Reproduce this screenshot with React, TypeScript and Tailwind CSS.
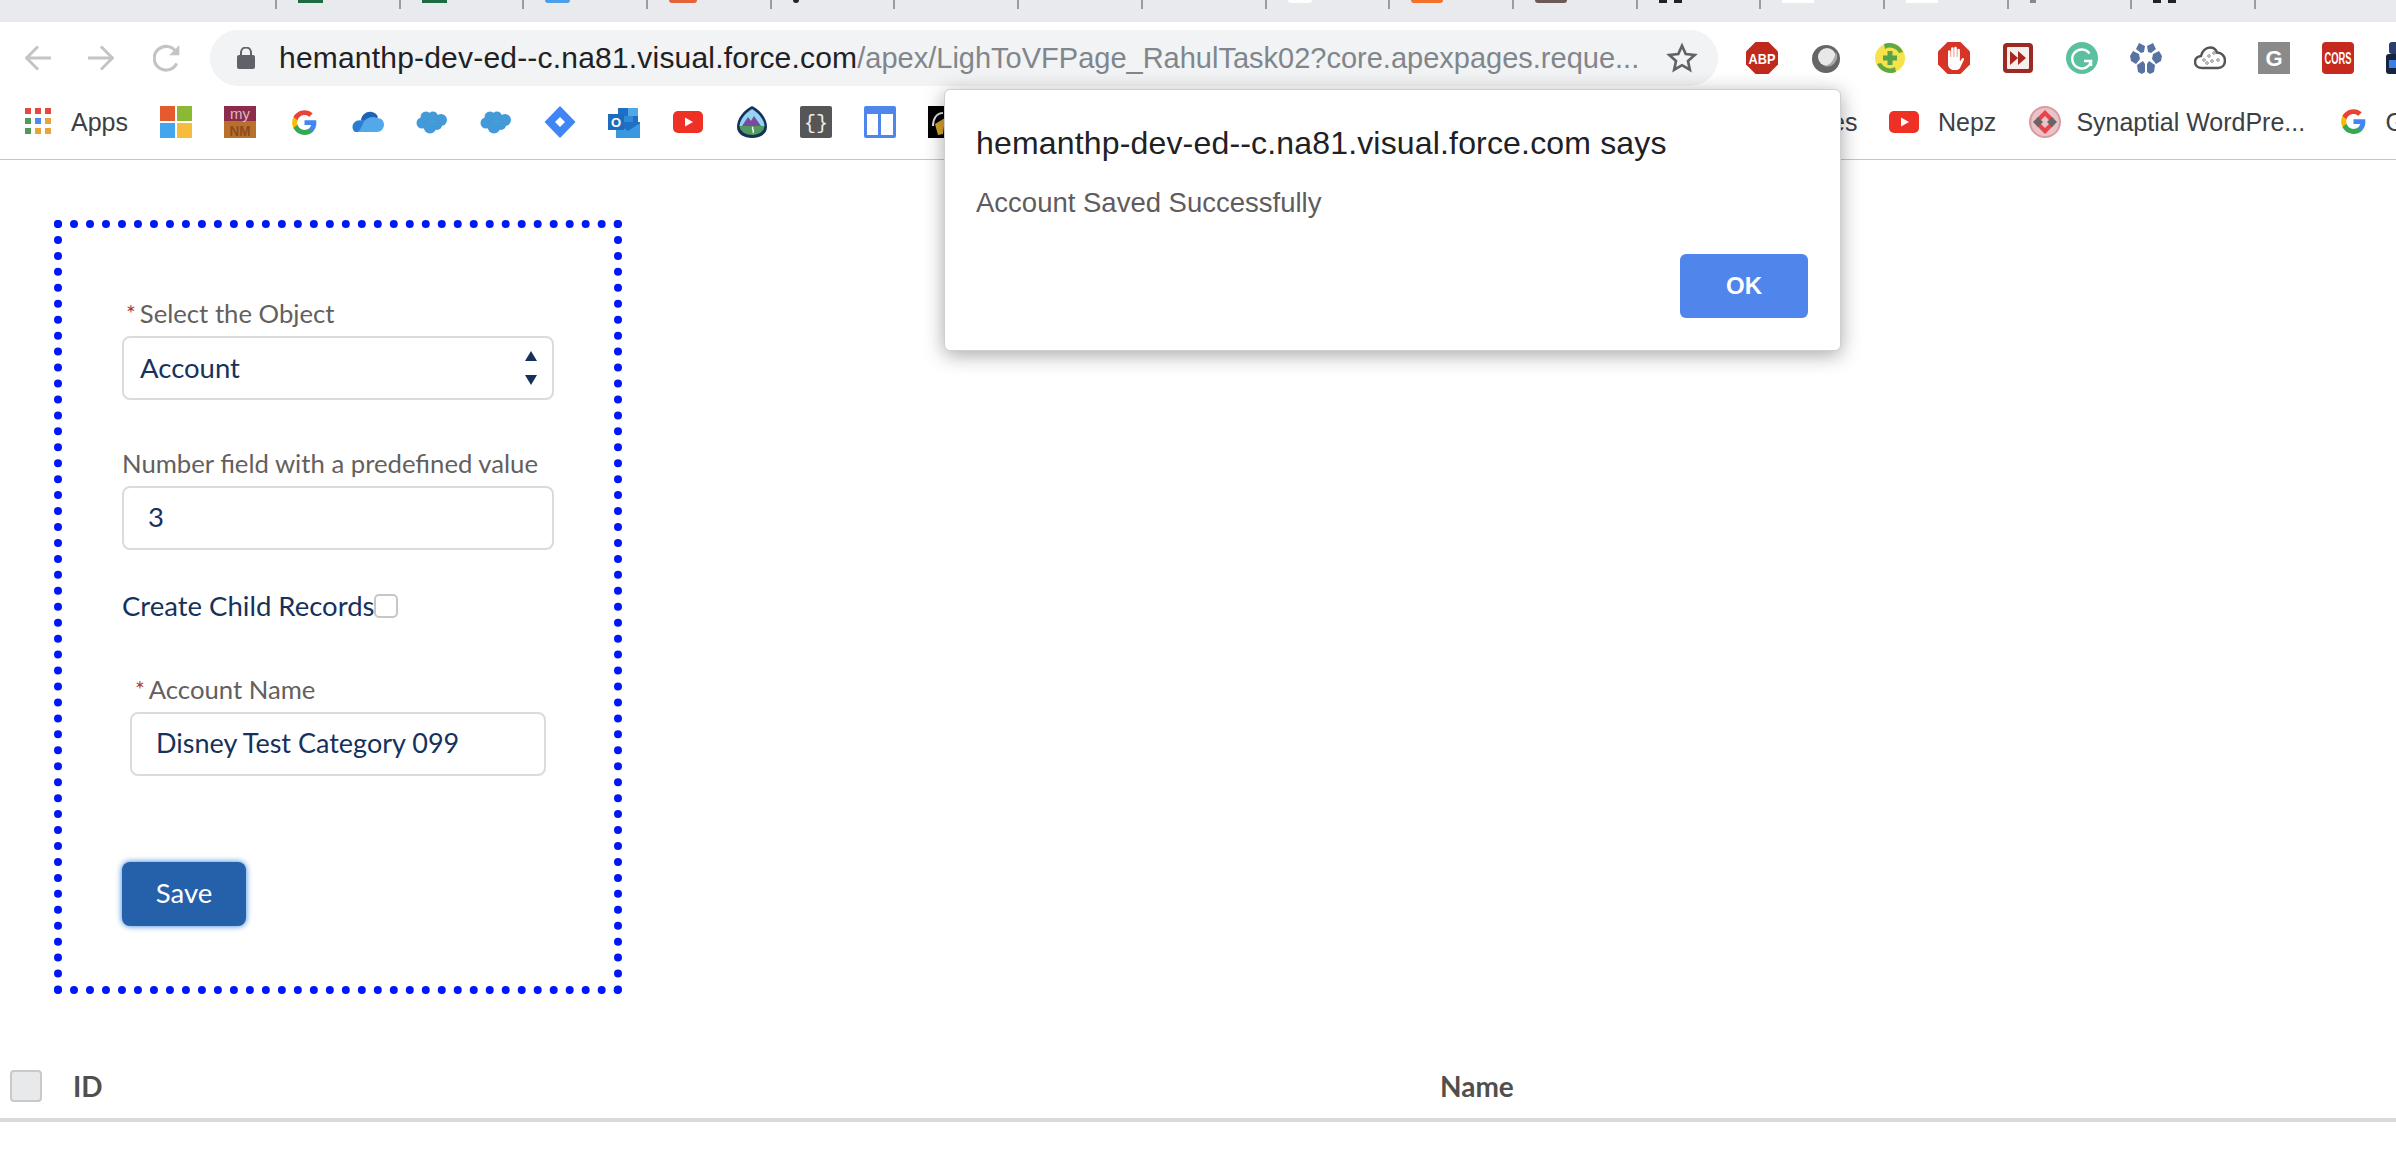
const tabs: { cls: string; w: number; braces?: boolean }[] = [
  { cls: "bg-[#1d6b43]", w: 25 },
  { cls: "bg-[#1d6b43]", w: 25 },
  { cls: "bg-[#4a9fe8] rounded-b-full", w: 25 },
  { cls: "bg-[#e4643a] rounded-b-full", w: 28 },
  { cls: "bg-[#222222] rounded-b-full", w: 6 },
  { cls: "", w: 0 },
  { cls: "", w: 0 },
  { cls: "", w: 0 },
  { cls: "bg-white rounded-b-full", w: 24 },
  { cls: "bg-[#f2722b] rounded-b-sm", w: 32 },
  { cls: "bg-[#6b5a55] rounded-b-full", w: 32 },
  { cls: "bg-[#222222]", w: 8, braces: true },
  { cls: "bg-white", w: 32 },
  { cls: "bg-white", w: 32 },
  { cls: "bg-[#888888]", w: 6 },
  { cls: "bg-[#222222]", w: 8, braces: true },
  { cls: "", w: 0 },
];

function GoogleG({ className }: { className: string }) {
  return (
    <svg viewBox="0 0 48 48" className={className}>
      <path fill="#4285F4" d="M45.12 24.5c0-1.56-.14-3.06-.4-4.5H24v8.51h11.84c-.51 2.75-2.06 5.08-4.39 6.64v5.52h7.11c4.16-3.83 6.56-9.47 6.56-16.17z" />
      <path fill="#34A853" d="M24 46c5.94 0 10.92-1.97 14.56-5.33l-7.11-5.52c-1.97 1.32-4.49 2.1-7.45 2.1-5.73 0-10.58-3.87-12.31-9.07H4.34v5.7C7.96 41.07 15.4 46 24 46z" />
      <path fill="#FBBC05" d="M11.69 28.18C11.25 26.86 11 25.45 11 24s.25-2.86.69-4.18v-5.7H4.34C2.85 17.09 2 20.45 2 24c0 3.55.85 6.91 2.34 9.88l7.35-5.7z" />
      <path fill="#EA4335" d="M24 10.75c3.23 0 6.13 1.11 8.41 3.29l6.31-6.31C34.91 4.18 29.93 2 24 2 15.4 2 7.96 6.93 4.34 14.12l7.35 5.7c1.73-5.2 6.58-9.07 12.31-9.07z" />
    </svg>
  );
}

function SfCloud() {
  return (
    <svg viewBox="0 0 32 32" className="w-8 h-8 shrink-0" fill="#429ad8">
      <circle cx="10" cy="11" r="5.5" />
      <circle cx="17" cy="10.5" r="5" />
      <circle cx="25" cy="14" r="6" />
      <circle cx="6" cy="17" r="5.5" />
      <circle cx="14" cy="21" r="6.5" />
      <circle cx="21" cy="19" r="5" />
    </svg>
  );
}

function YouTube() {
  return (
    <svg viewBox="0 0 32 32" className="w-8 h-8 shrink-0">
      <rect x="1" y="5" width="30" height="22" rx="5" fill="#ee3124" />
      <path d="M13 11.5l8 4.5-8 4.5z" fill="#fff" />
    </svg>
  );
}

const iconClass = "w-8 h-8 shrink-0";

function BookmarkIcons() {
  return (
    <>
      <svg viewBox="0 0 32 32" className={iconClass}>
        <rect x="0" y="0" width="15" height="15" fill="#e65a30" />
        <rect x="17" y="0" width="15" height="15" fill="#8cb834" />
        <rect x="0" y="17" width="15" height="15" fill="#42a5ee" />
        <rect x="17" y="17" width="15" height="15" fill="#f7bc3c" />
      </svg>
      <svg viewBox="0 0 32 32" className={iconClass}>
        <rect width="32" height="15" fill="#8b2c4a" />
        <rect y="15" width="32" height="17" fill="#b8702c" />
        <text transform="translate(16 13)" textAnchor="middle" fontSize="15" fontFamily="Liberation Sans" fill="#d9b9c2">my</text>
        <text transform="translate(16 30) scale(0.9 1)" textAnchor="middle" fontSize="15" fontWeight="700" fontFamily="Liberation Sans" fill="#8c4a22">NM</text>
      </svg>
      <div className="w-8 h-8 shrink-0 flex items-center justify-center">
        <GoogleG className="w-[27px] h-[27px]" />
      </div>
      <svg viewBox="0 0 32 32" className={iconClass}>
        <path d="M9 14c1-6 6-9 11-8 3 .6 5 2.6 6 5l-9 9z" fill="#1f63b5" />
        <path d="M3 26c-3-2-3.4-7-.6-9.6C4 15 6.500 14 9 14.500c2-1 5-1 7.500.6L13 26z" fill="#2b7cd3" />
        <path d="M12 15.500c3-4 8-5.500 13-3.500 4-.2 7 2.600 7 6.500 0 4-3 7.500-7 7.500H5c4-1 5-8 7-10.500z" fill="#52a8e8" />
      </svg>
      <SfCloud />
      <SfCloud />
      <svg viewBox="0 0 32 32" className={iconClass}>
        <path d="M16 0l15.500 16L16 32 .5 16z" fill="#3f85f5" />
        <path d="M16 11l5 5-5 5-5-5z" fill="#fff" />
      </svg>
      <svg viewBox="0 0 32 32" className={iconClass}>
        <rect x="10" y="2" width="20" height="16" fill="#1f6fc4" />
        <rect x="20" y="2" width="10" height="8" fill="#50a8e8" />
        <rect x="15" y="10" width="10" height="8" fill="#2f8ad8" />
        <path d="M8 17h24v15H8z" fill="#3a98e0" />
        <path d="M8 17l12 8 12-8v-1H8z" fill="#1f6fc4" />
        <rect x="0" y="8" width="16" height="16" fill="#1d6dbf" />
        <text x="8" y="21" textAnchor="middle" fontSize="13" fontWeight="700" fontFamily="Liberation Sans" fill="#fff">O</text>
      </svg>
      <YouTube />
      <svg viewBox="0 0 32 32" className={iconClass}>
        <path d="M16 0c8 4 15 12 15 21 0 7-7 11-15 11S1 28 1 21C1 12 8 4 16 0z" fill="#16325c" />
        <path d="M16 3c6 3.500 12 10 12.500 17h-25C4 13 10 6.500 16 3z" fill="#93d3f3" />
        <path d="M6 20l6-9 3 4 3-5 7 10z" fill="#7a4a9c" />
        <path d="M3.500 20h25c0 5-6 9-12.500 9S3.500 25 3.500 20z" fill="#4f9a5e" />
        <path d="M17 21c-2 2 2 3 0 6" stroke="#fff" strokeWidth="1.500" fill="none" />
      </svg>
      <svg viewBox="0 0 32 32" className={iconClass}>
        <rect width="32" height="32" rx="2" fill="#565656" />
        <text x="16" y="23" textAnchor="middle" fontSize="20" fontFamily="Liberation Mono" fill="#ececec">{"{}"}</text>
      </svg>
      <svg viewBox="0 0 32 32" className={iconClass}>
        <rect width="32" height="32" rx="2" fill="#5085ec" />
        <rect x="3" y="8" width="26" height="21" fill="#fff" />
        <rect x="14" y="8" width="3" height="21" fill="#5085ec" />
      </svg>
      <svg viewBox="0 0 32 32" className={iconClass}>
        <rect width="32" height="32" fill="#000" />
        <path d="M5 20c0-8 4-13 10-13" stroke="#ddd" strokeWidth="2" fill="none" />
        <path d="M7 18l10-6-2 16-5 1z" fill="#d9a32c" />
      </svg>
    </>
  );
}

function ExtensionIcons() {
  return (
    <>
      <svg viewBox="0 0 32 32" className={iconClass}>
        <path d="M9.500 0h13L32 9.500v13L22.500 32h-13L0 22.500v-13z" fill="#bf2a1c" />
        <text transform="translate(16 21.500) scale(0.85 1)" textAnchor="middle" fontSize="15" fontWeight="700" fontFamily="Liberation Sans" fill="#fff">ABP</text>
      </svg>
      <svg viewBox="0 0 32 32" className={iconClass}>
        <circle cx="16" cy="17" r="14" fill="#666666" />
        <circle cx="17" cy="15" r="9" fill="#e8e8e8" />
        <path d="M26 10a10 10 0 0 1-12 14c5 0 10-5 12-14z" fill="#a8a8a8" />
      </svg>
      <svg viewBox="0 0 32 32" className={iconClass}>
        <circle cx="16" cy="16" r="15" fill="#f6e24a" />
        <path d="M10 2a15 15 0 0 1 19 8l-4 1a10 10 0 0 0-14-4z" fill="#5fa84a" />
        <path d="M22 30a15 15 0 0 1-19-8l4-1a10 10 0 0 0 14 4z" fill="#5fa84a" />
        <path d="M13.500 9h5v4.500H23v5h-4.500V23h-5v-4.500H9v-5h4.500z" fill="#57a24a" />
      </svg>
      <svg viewBox="0 0 32 32" className={iconClass}>
        <path d="M9.500 0h13L32 9.500v13L22.500 32h-13L0 22.500v-13z" fill="#d63427" />
        <path d="M10 9.500a1.300 1.300 0 0 1 2.600 0V15h.5V6.500a1.300 1.300 0 0 1 2.600 0V15h.5V6a1.300 1.300 0 0 1 2.600 0v9h.5V8a1.300 1.300 0 0 1 2.600 0v11.500l2-3c1-1.300 2.800-.3 2 1.200L22 26c-1 1.500-2.500 2-4 2h-2c-3.500 0-6-2.500-6-6z" fill="#fff" />
      </svg>
      <svg viewBox="0 0 32 32" className={iconClass}>
        <rect x="1" y="1" width="30" height="30" rx="4" fill="#9a2a23" />
        <rect x="5" y="5" width="22" height="22" rx="1" fill="#f6efec" />
        <path d="M8 9l8 7-8 7zM16 9l8 7-8 7z" fill="#a8281f" />
      </svg>
      <svg viewBox="0 0 32 32" className={iconClass}>
        <circle cx="16" cy="16" r="16" fill="#5bc09f" />
        <path d="M23.500 11.500A9.500 9.500 0 1 0 25 19h-7" stroke="#fff" strokeWidth="2.500" fill="none" />
        <path d="M25 19v5" stroke="#fff" strokeWidth="2.500" />
      </svg>
      <svg viewBox="0 0 32 32" className={iconClass} fill="#5873a3">
        <path d="M9 1l6 3-1 6-3 1-5-4zM23 1l-6 3 1 6 3 1 5-4z" />
        <path d="M3 9l6 3 1 5-4 5-5-3-1-5zM29 9l-6 3-1 5 4 5 5-3 1-5z" />
        <path d="M7 23l6-4 2 3 0 8-3 2-4-2zM25 23l-6-4-2 3 0 8 3 2 4-2z" />
      </svg>
      <svg viewBox="0 0 32 32" className={iconClass}>
        <path d="M8 26c-4 0-7-2.500-7-6s3-5.500 6-6c1-5 5-8.500 9-8.500 3.500 0 6 2 7 5 4.500 0 8 3.500 8 8s-3 7.500-7 7.500z" fill="#fff" stroke="#555" strokeWidth="2.500" />
        <g fill="none" stroke="#888" strokeWidth="1">
          <circle cx="10" cy="18" r="1.300" />
          <circle cx="15" cy="14" r="1.300" />
          <circle cx="20" cy="11" r="1.300" />
          <circle cx="18" cy="19" r="1.300" />
          <circle cx="24" cy="18" r="1.300" />
          <circle cx="13" cy="21" r="1.300" />
        </g>
      </svg>
      <svg viewBox="0 0 32 32" className={iconClass}>
        <rect width="32" height="32" fill="#8a8a8a" />
        <text x="16" y="24" textAnchor="middle" fontSize="22" fontWeight="700" fontFamily="Liberation Sans" fill="#fff">G</text>
      </svg>
      <svg viewBox="0 0 32 32" className={iconClass}>
        <rect width="32" height="32" rx="4" fill="#c62a1e" />
        <text transform="translate(16 22) scale(0.55 1)" textAnchor="middle" fontSize="17" fontWeight="700" fontFamily="Liberation Sans" fill="#fff">CORS</text>
      </svg>
      <svg viewBox="0 0 32 32" className={iconClass}>
        <rect x="3" y="0" width="20" height="12" rx="3" fill="#2c3e6e" />
        <rect x="0" y="12" width="32" height="20" rx="3" fill="#17233f" />
        <rect x="3" y="18" width="20" height="8" fill="#3b82e8" />
      </svg>
    </>
  );
}

function Field({ star, label, labelClass }: { star?: boolean; label: string; labelClass: string }) {
  return (
    <div className={`h-8 flex items-center text-[25.700px] text-[#63605e] mb-[7px] ${labelClass}`}>
      {star && <span className="text-[#b03a30] mr-[4px] text-[23px] leading-none">*</span>}
      {label}
    </div>
  );
}

export default function App() {
  return (
    <div className="w-[2396px] h-[1168px] relative overflow-hidden bg-white font-['Lato',sans-serif]">
      {/* tab strip */}
      <div className="h-[22px] bg-[#e8eaed] flex pl-[275px] overflow-hidden">
        {tabs.map((t, i) => (
          <div key={i} className="w-[123.700px] shrink-0 h-[9px] border-l-2 border-[#9a9ca0] pl-[21px] flex gap-[7px]">
            {t.w > 0 && <div className={`h-[3px] ${t.cls}`} style={{ width: t.w }} />}
            {t.braces && <div className={`h-[3px] ${t.cls}`} style={{ width: t.w }} />}
          </div>
        ))}
      </div>

      {/* toolbar */}
      <div className="h-[64px] pt-2 flex pl-[25px] font-['Liberation_Sans',sans-serif]">
        <div className="flex items-center h-14 shrink-0">
          <svg viewBox="0 0 26 26" className="w-[26px] h-[26px]" fill="none" stroke="#c4c4c4" strokeWidth="3">
            <path d="M26 13H2M13 1.500L1.500 13 13 24.500" />
          </svg>
          <svg viewBox="0 0 26 26" className="w-[26px] h-[26px] ml-[37px]" fill="none" stroke="#c4c4c4" strokeWidth="3">
            <path d="M0 13h24M13 1.500L24.500 13 13 24.500" />
          </svg>
          <svg viewBox="0 0 26 26" className="w-[28px] h-[28px] ml-[39px]" fill="none" stroke="#c4c4c4" strokeWidth="3">
            <path d="M22 18a11 11 0 1 1-.5-10.500" />
            <path d="M24.500 1v9.500H15z" fill="#c4c4c4" stroke="none" />
          </svg>
        </div>
        <div className="ml-[29px] w-[1508px] h-14 rounded-full bg-[#f1f3f4] flex items-center pl-[27px] pr-5 shrink-0">
          <svg viewBox="0 0 18 22" className="w-[18px] h-[22px] shrink-0" fill="#5f6368">
            <rect x="0" y="8" width="18" height="14" rx="2" />
            <path d="M4 9V5.500a5 5 0 0 1 10 0V9" fill="none" stroke="#5f6368" strokeWidth="2" />
          </svg>
          <span className="ml-[24px] text-[30px] tracking-[0.2px] text-[#202124] whitespace-nowrap">
            hemanthp-dev-ed--c.na81.visual.force.com
            <span className="text-[29px] tracking-normal text-[#80868b]">/apex/LighToVFPage_RahulTask02?core.apexpages.reque...</span>
          </span>
          <svg viewBox="0 0 24 24" className="w-8 h-8 ml-auto" fill="none" stroke="#5f6368" strokeWidth="2">
            <path d="M12 2.800l2.800 6.200 6.700.7-5 4.500 1.400 6.600L12 17.400l-5.900 3.400 1.400-6.600-5-4.500 6.700-.7z" />
          </svg>
        </div>
        <div className="ml-[28px] flex gap-8 items-center h-14 shrink-0">
          <ExtensionIcons />
        </div>
      </div>

      {/* bookmarks bar */}
      <div className="h-[74px] border-b border-[#c6c6c6] pt-[20px] pl-[25px] flex items-start overflow-hidden font-['Liberation_Sans',sans-serif] text-[25px] leading-8 text-[#3c4043] whitespace-nowrap">
        <svg viewBox="0 0 26 26" className="w-[26px] h-[26px] mt-[2px] shrink-0">
          <rect x="0" y="0" width="6" height="6" fill="#e5483c" />
          <rect x="10" y="0" width="6" height="6" fill="#e5483c" />
          <rect x="20" y="0" width="6" height="6" fill="#e5483c" />
          <rect x="0" y="10" width="6" height="6" fill="#4f9a5a" />
          <rect x="10" y="10" width="6" height="6" fill="#4b8af0" />
          <rect x="20" y="10" width="6" height="6" fill="#e8a33c" />
          <rect x="0" y="20" width="6" height="6" fill="#4f9a5a" />
          <rect x="10" y="20" width="6" height="6" fill="#e8a33c" />
          <rect x="20" y="20" width="6" height="6" fill="#e8a33c" />
        </svg>
        <span className="ml-[20px] w-[57px] shrink-0">Apps</span>
        <div className="ml-[32px] flex gap-8 shrink-0">
          <BookmarkIcons />
        </div>
        <span className="ml-[871px] w-6 shrink-0 text-right">es</span>
        <div className="ml-[33px] shrink-0">
          <YouTube />
        </div>
        <span className="ml-[18px] shrink-0">Nepz</span>
        <svg viewBox="0 0 32 32" className="ml-[33px] w-8 h-8 shrink-0">
          <circle cx="16" cy="16" r="15" fill="#e8c3c8" stroke="#d99aa2" strokeWidth="2" />
          <path d="M16 4l9 9-3 3-6-6-6 6-3-3z" fill="#e8424a" />
          <path d="M16 28l9-9-3-3-6 6-6-6-3 3z" fill="#e8424a" />
          <path d="M4 16l5-5 5 5-5 5z" fill="#666" />
          <path d="M28 16l-5-5-5 5 5 5z" fill="#666" />
        </svg>
        <span className="ml-[15px] w-[227px] shrink-0">Synaptial WordPre...</span>
        <GoogleG className="ml-[37px] w-[27px] h-[27px] mt-[2px] shrink-0" />
        <span className="ml-[18px] shrink-0">G</span>
      </div>

      {/* form box */}
      <div className="ml-[54px] mt-[60px] w-[568px] h-[774px] border-8 border-dotted border-[#0018f5] pt-[69px] pl-[60px]">
        <Field star label="Select the Object" labelClass="pl-[4px]" />
        <div className="w-[432px] h-16 border-2 border-[#dddbda] rounded-lg flex items-center pl-[16px] pr-[15px] text-[27.500px] text-[#16325c]">
          Account
          <svg viewBox="0 0 12 34" className="ml-auto w-3 h-[34px]" fill="#16325c">
            <path d="M6 0l6 10H0zM6 34L0 24h12z" />
          </svg>
        </div>

        <div className="mt-[47px]">
          <Field label="Number field with a predefined value" labelClass="" />
        </div>
        <div className="w-[432px] h-16 border-2 border-[#dddbda] rounded-lg flex items-center pl-[24px] pb-[2px] text-[27.500px] text-[#16325c]">
          3
        </div>

        <div className="mt-[40px] h-8 flex items-center text-[27.500px] text-[#16325c]">
          Create Child Records
          <span className="w-6 h-6 border-2 border-[#c9c7c5] rounded-[5px] bg-white" />
        </div>

        <div className="mt-[51px] ml-2">
          <Field star label="Account Name" labelClass="pl-[5px]" />
          <div className="w-[416px] h-16 border-2 border-[#dddbda] rounded-lg flex items-center pl-[24px] pb-[2px] text-[27px] text-[#16325c]">
            Disney Test Category 099
          </div>
        </div>

        <button className="mt-[86px] w-[124px] h-16 pb-[2px] rounded-lg bg-[#2560ab] text-white text-[27.500px] shadow-[0_0_6px_#2f7fd6] flex items-center justify-center">
          Save
        </button>
      </div>

      {/* table header */}
      <div className="mt-[76px] pl-[10px] pb-4 border-b-4 border-[#dadada] flex items-center text-[28px] leading-8 font-bold text-[#514f4d]">
        <span className="w-8 h-8 rounded-[4px] border-2 border-[#c9c9c9] bg-[#e8e9eb]" />
        <span className="ml-[31px] w-[1367px]">ID</span>
        <span>Name</span>
      </div>

      {/* alert dialog */}
      <div className="absolute left-[944px] top-[89px] w-[897px] h-[262px] bg-white rounded-[6px] border border-[#cfcfcf] shadow-[0_4px_20px_rgba(0,0,0,0.35)] pl-[31px] pr-[32px] pt-[37px] flex flex-col font-['Liberation_Sans',sans-serif]">
        <div className="text-[32px] tracking-[0.17px] leading-8 text-[#202124]">hemanthp-dev-ed--c.na81.visual.force.com says</div>
        <div className="mt-[28px] text-[27.500px] leading-8 text-[#5f5c5e]">Account Saved Successfully</div>
        <button className="mt-[35px] self-end w-[128px] h-16 rounded-[6px] bg-[#5085ec] text-white text-[24px] font-bold">OK</button>
      </div>
    </div>
  );
}
